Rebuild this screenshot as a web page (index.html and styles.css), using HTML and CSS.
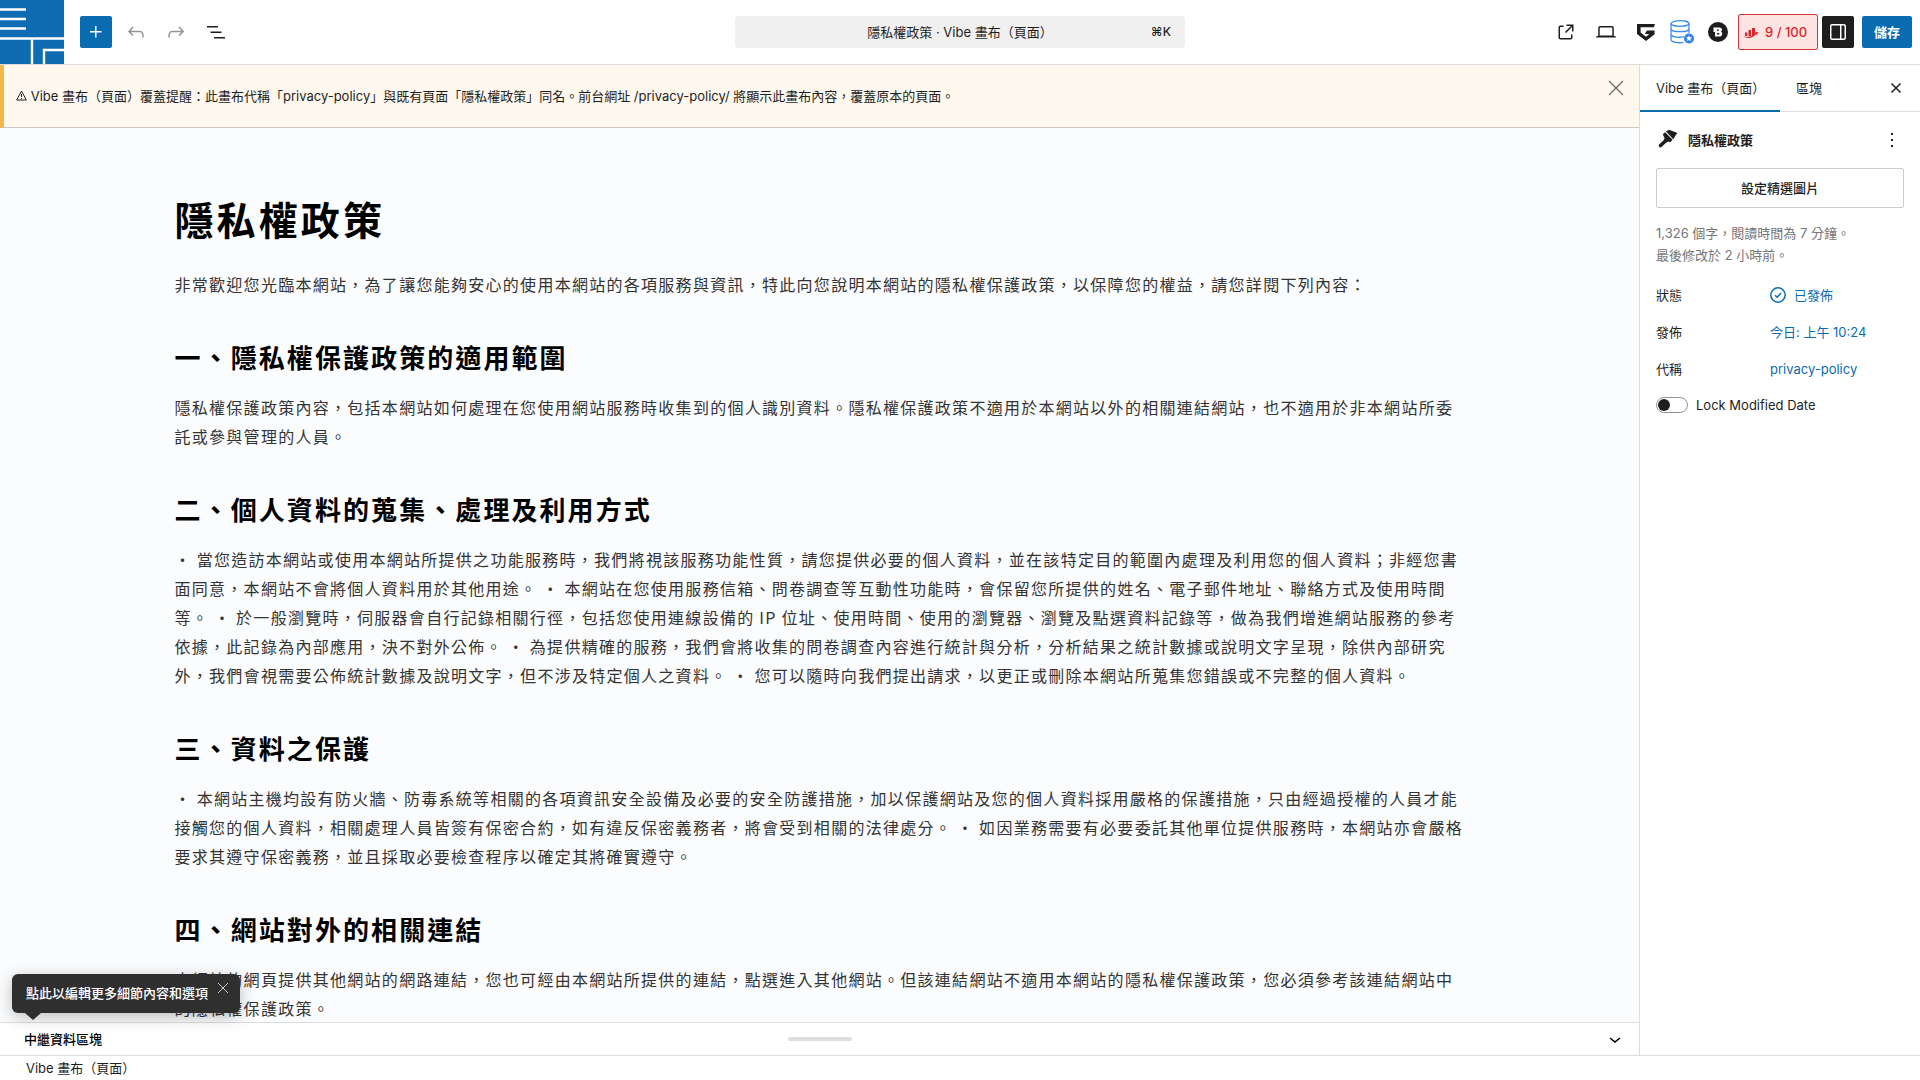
FILE: index.html
```html
<!DOCTYPE html>
<html lang="zh-Hant">
<head>
<meta charset="utf-8">
<meta name="viewport" content="width=device-width, initial-scale=1">
<title>隱私權政策</title>
<link rel="stylesheet" href="styles.css">
</head>
<body>
<div class="app">
  <header class="topbar">
    <div class="topbar-left">
      <a class="site-logo" href="#" aria-label="返回">
        <svg width="64" height="64" viewBox="0 0 64 64" fill="none" stroke="#fff" stroke-width="2.400"><path d="M0 9.500H26M0 19H26M0 28.500H26M0 38.500H64M32 39V64M44 64V50H64"/></svg>
      </a>
      <button class="icon-btn primary" type="button" aria-label="新增區塊"><svg width="24" height="24" viewBox="0 0 24 24" fill="currentColor"><path d="M11 12.500V17.500H12.500V12.500H17.500V11H12.500V6H11V11H6V12.500H11Z"/></svg></button>
      <button class="icon-btn muted" type="button" aria-label="復原"><svg width="24" height="24" viewBox="0 0 24 24" fill="currentColor"><path d="M18.300 11.700c-.6-.6-1.400-.9-2.300-.9H6.700l2.900-3.300-1.100-1-4.500 5L8.500 16l1-1-2.700-2.700H16c.5 0 .9.2 1.300.5 1 1 1 3.400 1 4.500v.3h1.500v-.2c0-1.500 0-4.300-1.500-5.700z"/></svg></button>
      <button class="icon-btn muted" type="button" aria-label="重做"><svg width="24" height="24" viewBox="0 0 24 24" fill="currentColor"><path d="M15.600 6.500l-1.100 1 2.900 3.300H8c-.9 0-1.700.3-2.300.9-1.400 1.500-1.400 4.200-1.400 5.600v.2h1.500v-.3c0-1.100 0-3.500 1-4.500.3-.3.7-.5 1.300-.5h9.200L14.500 15l1.100 1.100 4.600-4.600-4.600-5z"/></svg></button>
      <button class="icon-btn" type="button" aria-label="文件概觀"><svg width="24" height="24" viewBox="0 0 24 24" fill="currentColor"><path d="M3 6h11v1.500H3V6Zm3.500 5.500h11V13h-11v-1.500ZM21 17H10v1.500h11V17Z"/></svg></button>
    </div>
    <button class="command" type="button"><span class="command-title">隱私權政策 · Vibe 畫布（頁面）</span><span class="command-key">⌘K</span></button>
    <div class="topbar-right">
      <div class="view-tools">
        <button class="icon-btn" type="button" aria-label="檢視"><svg width="24" height="24" viewBox="0 0 24 24" fill="currentColor"><path d="M19.500 4.500h-7V6h4.440l-5.970 5.970 1.060 1.060L18 7.060v4.440h1.500v-7Zm-13 1a2 2 0 0 0-2 2v10a2 2 0 0 0 2 2h10a2 2 0 0 0 2-2v-3H17v3a.5.5 0 0 1-.5.5h-10a.5.5 0 0 1-.5-.5v-10a.5.5 0 0 1 .5-.5h3V5.500h-3Z"/></svg></button>
        <button class="icon-btn" type="button" aria-label="預覽"><svg width="24" height="24" viewBox="0 0 24 24" fill="currentColor"><path d="M20.500 16h-.7V8c0-1.100-.9-2-2-2H6.200c-1.100 0-2 .9-2 2v8h-.7c-.8 0-1.500.7-1.500 1.500h20c0-.8-.7-1.500-1.500-1.500zM5.700 8c0-.3.200-.5.5-.5h11.600c.3 0 .5.2.5.5v7.600H5.700V8z"/></svg></button>
        <button class="icon-btn" type="button" aria-label="GreenShift"><svg width="24" height="24" viewBox="0 0 24 24" fill="#1e1e1e"><path d="M3 4H21L19.800 7.200H6.600V12.400L12 16.800 15.300 14H10.800L13 10.600H20.600V14.200L12 21 3 14Z"/></svg></button>
      </div>
      <button class="icon-btn" type="button" aria-label="資料庫"><svg width="24" height="24" viewBox="0 0 24 24" fill="none" stroke="#3d8bf0" stroke-width="1.300"><ellipse cx="10" cy="3.500" rx="9" ry="2.800"/><path d="M1 3.500V20M19 3.500V13M1 9c1 3.600 17 3.600 18 0M1 14.500c1 2.800 9 3.300 13 2.200M1 20c1 2.500 8 3.300 12.500 2.300"/><circle cx="19" cy="18.500" r="5" fill="#2f80ed" stroke="none"/><path d="M19 15.300l.9 2 2.200.2-1.700 1.500.6 2.200-2-1.200-2 1.200.6-2.200-1.700-1.500 2.200-.2z" fill="#fff" stroke="none"/></svg></button>
      <button class="icon-btn" type="button" aria-label="Bricks"><svg width="24" height="24" viewBox="0 0 24 24"><circle cx="12" cy="12" r="10" fill="#1e1e1e"/><path d="M7.500 7.500H13.200C16.500 7.500 16.700 11 14.700 11.700C17.300 12.500 16.600 16.500 13.300 16.500H9V12H7.500Z" fill="#fff"/><path d="M11 9.500h2v1.200h-2zM11 13h2.300v1.400H11z" fill="#1e1e1e"/></svg></button>
      <button class="score" type="button"><svg width="16" height="16" viewBox="0 0 16 16" fill="#d9262b"><path d="M2 8.500h2.500V12H2zM5.500 6h2.500v6H5.500zM9 4h3v7.500H9zM0 12.200C6 14.500 10.500 11 12.500 9.200L12 8l3.500.2-2 3-.4-1C10 13.500 5 15.500 0 12.200Z"/></svg>9 / 100</button>
      <button class="icon-btn dark" type="button" aria-label="設定"><svg width="24" height="24" viewBox="0 0 24 24" fill="currentColor"><path fill-rule="evenodd" d="M18 4H6c-1.100 0-2 .9-2 2v12c0 1.100.9 2 2 2h12c1.100 0 2-.9 2-2V6c0-1.100-.9-2-2-2zm-4 14.500H6c-.3 0-.5-.2-.5-.5V6c0-.3.2-.5.5-.5h8v13zm4.500-.5c0 .3-.2.500-.5.500h-2.500v-13H18c.3 0 .5.200.5.500v12z"/></svg></button>
      <button class="save" type="button">儲存</button>
    </div>
  </header>

  <div class="workspace">
    <main class="editor">
      <div class="notice">
        <p class="notice-text"><svg class="warn" width="11" height="11" viewBox="0 0 11 11" fill="none" stroke="currentColor"><path d="M5.500 1 10.300 10H.7ZM5.500 4v3M5.500 8v1" stroke-linejoin="round"/></svg> Vibe 畫布（頁面）覆蓋提醒：此畫布代稱「privacy-policy」與既有頁面「隱私權政策」同名。前台網址 /privacy-policy/ 將顯示此畫布內容，覆蓋原本的頁面。</p>
        <button class="notice-close" type="button" aria-label="關閉通知"><svg width="16" height="16" viewBox="0 0 16 16" fill="none" stroke="currentColor" stroke-width="1.300"><path d="M1 1l14 14M15 1 1 15"/></svg></button>
      </div>
      <div class="canvas">
        <article class="doc">
          <h1>隱私權政策</h1>
          <p>非常歡迎您光臨本網站，為了讓您能夠安心的使用本網站的各項服務與資訊，特此向您說明本網站的隱私權保護政策，以保障您的權益，請您詳閱下列內容：</p>
          <h2>一、隱私權保護政策的適用範圍</h2>
          <p>隱私權保護政策內容，包括本網站如何處理在您使用網站服務時收集到的個人識別資料。隱私權保護政策不適用於本網站以外的相關連結網站，也不適用於非本網站所委託或參與管理的人員。</p>
          <h2>二、個人資料的蒐集、處理及利用方式</h2>
          <p>・ 當您造訪本網站或使用本網站所提供之功能服務時，我們將視該服務功能性質，請您提供必要的個人資料，並在該特定目的範圍內處理及利用您的個人資料；非經您書面同意，本網站不會將個人資料用於其他用途。 ・ 本網站在您使用服務信箱、問卷調查等互動性功能時，會保留您所提供的姓名、電子郵件地址、聯絡方式及使用時間等。 ・ 於一般瀏覽時，伺服器會自行記錄相關行徑，包括您使用連線設備的 IP 位址、使用時間、使用的瀏覽器、瀏覽及點選資料記錄等，做為我們增進網站服務的參考依據，此記錄為內部應用，決不對外公佈。 ・ 為提供精確的服務，我們會將收集的問卷調查內容進行統計與分析，分析結果之統計數據或說明文字呈現，除供內部研究外，我們會視需要公佈統計數據及說明文字，但不涉及特定個人之資料。 ・ 您可以隨時向我們提出請求，以更正或刪除本網站所蒐集您錯誤或不完整的個人資料。</p>
          <h2>三、資料之保護</h2>
          <p>・ 本網站主機均設有防火牆、防毒系統等相關的各項資訊安全設備及必要的安全防護措施，加以保護網站及您的個人資料採用嚴格的保護措施，只由經過授權的人員才能接觸您的個人資料，相關處理人員皆簽有保密合約，如有違反保密義務者，將會受到相關的法律處分。 ・ 如因業務需要有必要委託其他單位提供服務時，本網站亦會嚴格要求其遵守保密義務，並且採取必要檢查程序以確定其將確實遵守。</p>
          <h2>四、網站對外的相關連結</h2>
          <p>本網站的網頁提供其他網站的網路連結，您也可經由本網站所提供的連結，點選進入其他網站。但該連結網站不適用本網站的隱私權保護政策，您必須參考該連結網站中的隱私權保護政策。</p>
        </article>
      </div>
      <section class="metabox">
        <span class="metabox-title">中繼資料區塊</span>
        <span class="handle"></span>
        <button class="metabox-toggle" type="button" aria-label="切換中繼資料區塊"><svg width="24" height="24" viewBox="0 0 24 24" fill="currentColor"><path d="M17.500 11.600 12 16l-5.500-4.400.9-1.200L12 14l4.500-3.600 1 1.200z"/></svg></button>
        <div class="tip" role="tooltip"><span>點此以編輯更多細節內容和選項</span><button class="tip-close" type="button" aria-label="關閉提示"><svg width="10" height="10" viewBox="0 0 10 10" fill="none" stroke="currentColor"><path d="M0 0l10 10M10 0 0 10"/></svg></button></div>
      </section>
    </main>

    <aside class="sidebar">
      <div class="tabs">
        <button class="tab active" type="button">Vibe 畫布（頁面）</button>
        <button class="tab" type="button">區塊</button>
        <button class="tabs-close" type="button" aria-label="關閉設定"><svg width="10" height="10" viewBox="0 0 10 10" fill="none" stroke="currentColor" stroke-width="1.500"><path d="M.5.500l9 9M9.500.500l-9 9"/></svg></button>
      </div>
      <div class="panel">
        <div class="panel-head">
          <svg width="24" height="24" viewBox="0 0 24 24" fill="#1e1e1e"><path d="M4.500 17.500 9.500 13" stroke="#1e1e1e" stroke-width="3.600" stroke-linecap="round"/><path d="M6.800 6.200 9.200 4.200 16.600 11.800 14.300 14.200 12 13.400 9.800 15 7.500 12.600 8.600 10.200Z"/><path d="M10 3.600 13 1.800 17 3.200 21.500 5 19.500 7.500 17.300 11.200Z"/></svg>
          <h2 class="panel-title">隱私權政策</h2>
          <button class="more" type="button" aria-label="操作"><svg width="24" height="24" viewBox="0 0 24 24" fill="currentColor"><path d="M11 5h2v2h-2zM11 11h2v2h-2zM11 17h2v2h-2z"/></svg></button>
        </div>
        <button class="featured" type="button">設定精選圖片</button>
        <div class="stats"><p>1,326 個字，閱讀時間為 7 分鐘。</p><p>最後修改於 2 小時前。</p></div>
        <dl class="fields">
          <dt>狀態</dt><dd><a href="#"><svg width="16" height="16" viewBox="0 0 16 16" fill="none" stroke="currentColor" stroke-width="1.500"><circle cx="8" cy="8" r="7.200"/><path d="M5 8.200l2.200 2L11 6"/></svg>已發佈</a></dd>
          <dt>發佈</dt><dd><a href="#">今日: 上午 10:24</a></dd>
          <dt>代稱</dt><dd><a href="#">privacy-policy</a></dd>
        </dl>
        <label class="lock"><input class="switch" type="checkbox">Lock Modified Date</label>
      </div>
    </aside>
  </div>

  <footer class="footer">Vibe 畫布（頁面）</footer>
</div>
</body>
</html>
```

FILE: styles.css
```css
* { box-sizing: border-box; }
body { margin: 0; background: #fff; color: #1e1e1e; font: 13px/20px Inter, "Noto Sans CJK TC", sans-serif; }
h1, h2, p, dl, dd { margin: 0; }
button { margin: 0; padding: 0; border: 0; background: none; color: inherit; font: inherit; }
a { color: #0a6cb0; text-decoration: none; }
svg { display: block; flex: none; overflow: visible; }
.app { display: flex; flex-direction: column; height: 100vh; overflow: hidden; }

.topbar { display: grid; grid-template-columns: 1fr 450px 1fr; align-items: center; flex: none; border-bottom: 1px solid #ddd; }
.topbar-left { display: flex; align-items: center; gap: 8px; }
.site-logo { width: 64px; height: 64px; margin-right: 8px; overflow: hidden; background: #0f6cb2; }
.icon-btn { display: flex; align-items: center; justify-content: center; width: 32px; height: 32px; border-radius: 2px; }
.primary { background: #0a6cb0; color: #fff; }
.dark { background: #1e1e1e; color: #fff; }
.muted { color: #949494; }
.command { display: grid; grid-template-columns: 1fr auto 1fr; align-items: center; height: 32px; padding: 0 14px; border-radius: 4px; background: #f0f0f0; }
.command-title { grid-column: 2; }
.command-key { justify-self: end; font-weight: 500; font-size: 12px; }
.topbar-right { display: flex; align-items: center; justify-content: flex-end; gap: 4px; padding-right: 8px; }
.view-tools { display: flex; gap: 8px; }
.score { display: flex; align-items: center; gap: 6px; width: 80px; height: 36px; padding-left: 4px; border: 1px solid #cf3a3c; border-radius: 2px; background: #fde3e1; color: #d9262b; font-weight: 500; white-space: nowrap; }
.save { width: 50px; height: 32px; margin-left: 4px; border-radius: 2px; background: #0a6cb0; color: #fff; font-weight: 600; }

.workspace { display: flex; flex: 1; min-height: 0; }
.editor { display: flex; flex-direction: column; flex: 1; min-width: 0; }
.notice { display: flex; align-items: center; justify-content: space-between; flex: none; height: 63px; padding: 0 15px 0 12px; border-left: 4px solid #f0b849; border-bottom: 1px solid #c8c6c0; background: #fef8ee; }
.warn { display: inline-block; }
.notice-close { align-self: flex-start; margin-top: 15px; color: #6a675f; }
.canvas { flex: 1; min-height: 0; overflow: hidden; padding: 62px 24px 0; background: #fbfcfe; }
.doc { max-width: 1290px; margin: 0 auto; color: #333; font: 16px/29px "Noto Sans CJK TC", sans-serif; letter-spacing: 0.08em; }
.doc h1 { margin-bottom: 24px; color: #000; font-size: 39px; line-height: 56px; letter-spacing: 0.08em; }
.doc h2 { margin: 38px 0 16px; color: #000; font-size: 26px; line-height: 40px; letter-spacing: 0.08em; }

.metabox { position: relative; display: grid; grid-template-columns: 1fr auto 1fr; align-items: center; flex: none; height: 33px; padding: 0 12px; border-top: 1px solid #ddd; color: #000; }
.metabox-title { padding-left: 12px; font-weight: 500; }
.handle { width: 64px; height: 4px; border-radius: 2px; background: #ddd; }
.metabox-toggle { justify-self: end; }
.tip { position: absolute; left: 12px; bottom: 42px; display: flex; gap: 10px; height: 39px; padding: 9px 12px 10px 14px; border-radius: 6px; background: #2f2f2f; color: #fff; font-weight: 500; box-shadow: 0 4px 16px rgba(0, 0, 0, 0.25); }
.tip::after { content: ""; position: absolute; left: 13px; top: 100%; border: 8px solid transparent; border-top: 7px solid #2f2f2f; border-bottom: 0; }
.tip-close { align-self: flex-start; color: #ccc; }

.sidebar { flex: none; width: 281px; border-left: 1px solid #ddd; }
.tabs { display: flex; align-items: stretch; height: 47px; border-bottom: 1px solid #ddd; }
.tab { padding: 0 16px; }
.active { width: 140px; margin-bottom: -1px; border-bottom: 2px solid #0a6cb0; white-space: nowrap; }
.tabs-close { margin-left: auto; padding: 0 19px; }
.panel { padding: 16px; }
.panel-head { display: flex; align-items: center; gap: 8px; height: 24px; }
.panel-title { flex: 1; font-size: 13px; font-weight: 600; }
.featured { width: 100%; height: 40px; margin-top: 16px; border: 1px solid #ccc; border-radius: 2px; font-weight: 500; }
.stats { margin-top: 14px; color: #757575; line-height: 22px; }
.fields { display: grid; grid-template-columns: 114px 1fr; row-gap: 5px; margin-top: 13px; line-height: 32px; }
.fields a { display: flex; align-items: center; gap: 8px; }
.lock { display: flex; align-items: center; gap: 8px; margin-top: 10px; }
.switch { appearance: none; display: flex; align-items: center; width: 32px; height: 16px; margin: 0; padding: 0 1px; border: 1px solid #949494; border-radius: 8px; background: #fff; }
.switch::before { content: ""; width: 12px; height: 12px; border-radius: 50%; background: #1e1e1e; }

.footer { flex: none; height: 25px; padding: 2px 26px; border-top: 1px solid #ddd; }
```
